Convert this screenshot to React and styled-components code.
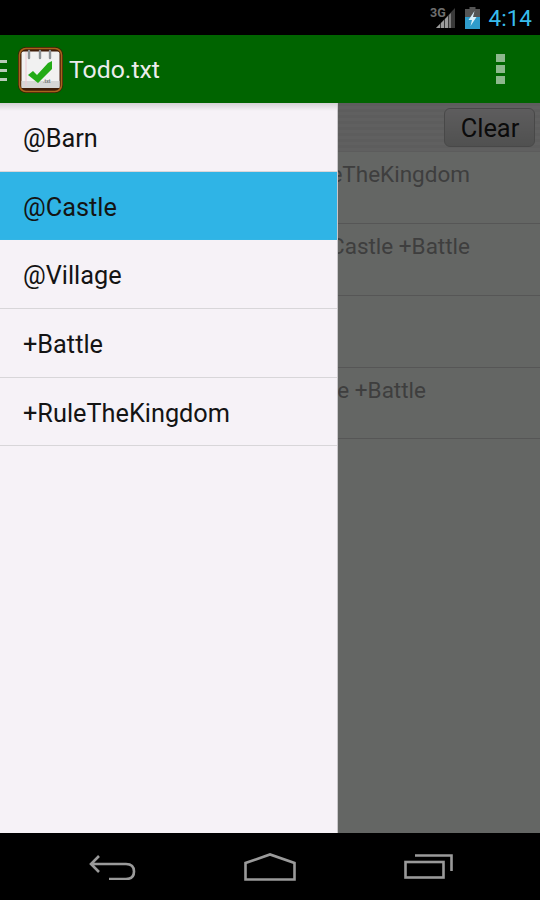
import React from "react";
import styled, { createGlobalStyle } from "styled-components";

const GlobalStyle = createGlobalStyle`
  html, body {
    margin: 0;
    padding: 0;
    background: #000;
  }
  * {
    box-sizing: border-box;
  }
`;

const Screen = styled.div`
  width: 540px;
  height: 900px;
  display: flex;
  flex-direction: column;
  overflow: hidden;
  font-family: Roboto, "Liberation Sans", sans-serif;
`;

const StatusBar = styled.div`
  height: 35px;
  flex: none;
  background: #000;
  display: flex;
  align-items: center;
  justify-content: flex-end;
  padding-right: 8px;
`;

const StatusIcon = styled.svg`
  display: block;
  flex: none;
  margin-right: ${(props) => props.$gap}px;
`;

const Clock = styled.span`
  color: #38bdee;
  font-size: 22.5px;
  font-weight: 400;
`;

const ActionBar = styled.header`
  height: 68px;
  flex: none;
  background: #006400;
  display: flex;
  align-items: center;
  position: relative;
  z-index: 3;
`;

const Hamburger = styled.div`
  width: 7px;
  height: 21px;
  margin: 2px 11px 0 0;
  display: flex;
  flex-direction: column;
  justify-content: space-between;
`;

const HamburgerBar = styled.span`
  height: 3px;
  background: #b9cbb9;
`;

const AppIcon = styled.svg`
  display: block;
  flex: none;
  margin: 1px 6px 0 0;
`;

const Title = styled.h1`
  margin: 0;
  flex: 1;
  color: #ececec;
  font-size: 24.8px;
  font-weight: 400;
`;

const Overflow = styled.div`
  width: 9px;
  margin-right: 35px;
  display: flex;
  flex-direction: column;
  gap: 3px;
`;

const OverflowDot = styled.span`
  height: 8px;
  background: #8db88d;
`;

const Body = styled.main`
  flex: 1;
  position: relative;
  background: #fafffa;
  overflow: hidden;
`;

const FilterBar = styled.div`
  height: 49px;
  display: flex;
  align-items: flex-start;
  justify-content: flex-end;
  padding: 5px 5px 0 0;
  border-bottom: 1px solid #e6e6e6;
  background: repeating-linear-gradient(
    to bottom,
    #e8e8e8 0,
    #e8e8e8 3px,
    #efefef 3px,
    #efefef 6px
  );
`;

const ClearButton = styled.button`
  width: 91px;
  height: 39px;
  padding: 0 0 0 1px;
  border: 1px solid #b4b4b4;
  border-radius: 6px;
  background: linear-gradient(to bottom, #eae8ea, #c8c9c8);
  color: #1c1c1c;
  font-family: inherit;
  font-size: 25.4px;
`;

const TaskRow = styled.div`
  height: 71.85px;
  display: flex;
  justify-content: flex-end;
  padding: 8px ${(props) => props.$end}px 0 0;
  border-bottom: 1px solid #d6d6d6;
  color: #9c9c9c;
  font-size: 22.5px;
  line-height: 28px;
  white-space: nowrap;
`;

const Scrim = styled.div`
  position: absolute;
  inset: 0;
  background: rgba(0, 0, 0, 0.6);
`;

const Drawer = styled.nav`
  position: absolute;
  top: 0;
  left: 0;
  bottom: 0;
  width: 338px;
  background: #f6f2f7;
  border-right: 1px solid #c9c7ca;
`;

const ToolbarShadow = styled.div`
  position: absolute;
  top: 0;
  left: 0;
  right: 0;
  height: 8px;
  background: linear-gradient(to bottom, rgba(0, 0, 0, 0.14), rgba(0, 0, 0, 0));
`;

const DrawerItem = styled.div`
  height: 68.7px;
  display: flex;
  align-items: center;
  padding: 3px 0 0 23px;
  border-bottom: 1px solid ${(props) => (props.$selected ? "#33b5e5" : "#d8d6d9")};
  background: ${(props) => (props.$selected ? "#2fb4e6" : "transparent")};
  color: #141414;
  font-size: 25.3px;
`;

const NavBar = styled.footer`
  height: 67px;
  flex: none;
  background: #000;
  display: grid;
  grid-template-columns: repeat(3, 158px);
  justify-content: center;
  justify-items: center;
  align-items: center;
`;

const NavIcon = styled.svg`
  display: block;
  fill: none;
  stroke: #9a9a9a;
  stroke-width: 2.6;
`;

const tasks = [
  { text: "+RuleTheKingdom", end: 70 },
  { text: "@Castle +Battle", end: 70 },
  { text: "", end: 70 },
  { text: "@Village +Battle", end: 114 },
];

const filters = ["@Barn", "@Castle", "@Village", "+Battle", "+RuleTheKingdom"];

function App() {
  return (
    <Screen>
      <GlobalStyle />
      <StatusBar>
        <StatusIcon width="26" height="28" viewBox="0 -3 26 28" $gap={9}>
          <path d="M6 21 L25 1 V21 Z" fill="#3a3a3a" />
          <path d="M6 21 L10 17 V21 Z M11 21 V16 L14 13 V21 Z M15 21 V12 L18 9 V21 Z" fill="#9c9c9c" />
          <path d="M19 21 V8 L21 6 V21 Z" fill="#7c7c7c" />
          <text x="0" y="10" fontSize="12.5" fontWeight="700" fontFamily="Roboto, sans-serif" fill="#6e6e6e">
            3G
          </text>
        </StatusIcon>
        <StatusIcon width="15" height="22" viewBox="0 0 15 22" $gap={9}>
          <path d="M4.500 0 H10.500 V2 H15 V22 H0 V2 H4.500 Z" fill="#555" />
          <rect x="0" y="10" width="15" height="12" fill="#2f9ccb" />
          <path d="M9.500 4 L3.500 13 H7 L5.500 19 L11.500 10 H8 Z" fill="#d9f0fa" />
        </StatusIcon>
        <Clock>4:14</Clock>
      </StatusBar>

      <ActionBar>
        <Hamburger>
          <HamburgerBar />
          <HamburgerBar />
          <HamburgerBar />
        </Hamburger>
        <AppIcon width="45" height="46" viewBox="0 0 45 46">
          <rect x="0" y="0" width="45" height="46" rx="8" fill="#3f1d08" />
          <rect x="1.500" y="1.500" width="42" height="43" rx="6.500" fill="none" stroke="#a8641c" strokeWidth="1.6" />
          <rect x="3.500" y="4.500" width="38" height="36.500" rx="2" fill="#f1f1f1" />
          <rect x="3.500" y="34" width="38" height="7" fill="#d6d6d6" />
          <path d="M8 5 V39" stroke="#eec7cf" strokeWidth="1" />
          <path d="M11 4 V11 M22 4 V11 M32 4 V11" stroke="#8d9296" strokeWidth="2.400" strokeLinecap="round" />
          <path d="M10 28 L15 24 L19 28 L30 16 L34 14 L34 22 L20 36 Z" fill="#23ab16" />
          <text x="25" y="36" fontSize="5" fontWeight="700" fontFamily="Roboto, sans-serif" fill="#777">
            .txt
          </text>
        </AppIcon>
        <Title>Todo.txt</Title>
        <Overflow>
          <OverflowDot />
          <OverflowDot />
          <OverflowDot />
        </Overflow>
      </ActionBar>

      <Body>
        <FilterBar>
          <ClearButton>Clear</ClearButton>
        </FilterBar>
        {tasks.map((task, index) => (
          <TaskRow key={index} $end={task.end}>
            {task.text}
          </TaskRow>
        ))}
        <Scrim />
        <Drawer>
          <ToolbarShadow />
          {filters.map((filter) => (
            <DrawerItem key={filter} $selected={filter === "@Castle"}>
              {filter}
            </DrawerItem>
          ))}
        </Drawer>
      </Body>

      <NavBar>
        <NavIcon width="47" height="26" viewBox="0 0 47 26">
          <path d="M10 2 L2 10 L10 18 M2 10 H37 Q45 10 45 17.500 Q45 25 37 25 H20" />
        </NavIcon>
        <NavIcon width="52" height="28" viewBox="0 0 52 28">
          <path d="M1.500 26.500 V10 L26 1.500 L50.500 10 V26.500 Z" />
        </NavIcon>
        <NavIcon width="49" height="25" viewBox="0 0 49 25">
          <rect x="1.500" y="8" width="38" height="15.500" />
          <path d="M11 1.500 H47.500 V17" />
        </NavIcon>
      </NavBar>
    </Screen>
  );
}

export default App;
